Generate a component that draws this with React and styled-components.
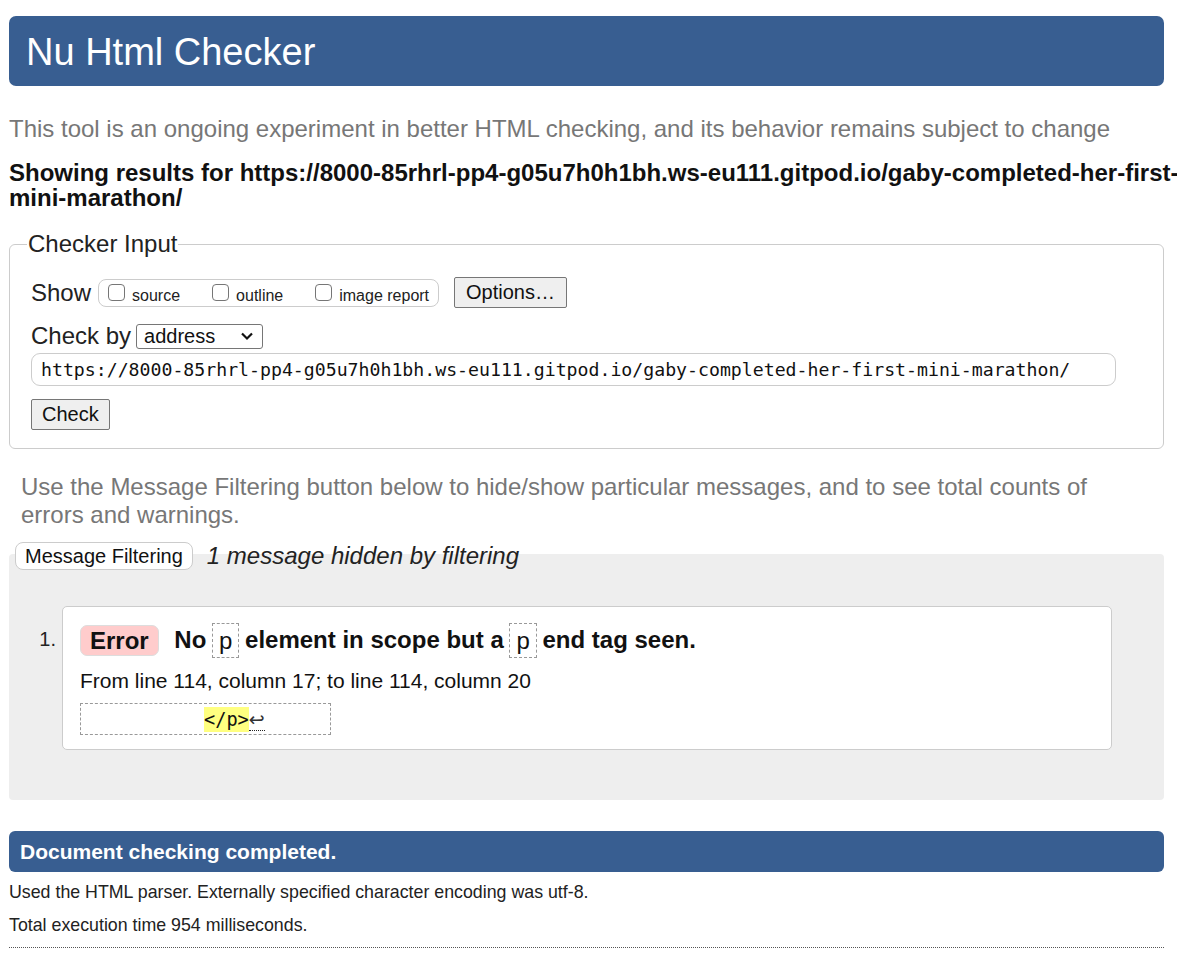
import React from "react";
import styled, { createGlobalStyle } from "styled-components";

const Global = createGlobalStyle`
  html, body { margin: 0; padding: 0; background: #fff; }
  body { font-family: "Liberation Sans", Arial, sans-serif; color: #000; }
`;

const Page = styled.div`
  width: 1155px;
  margin-left: 9px;
  padding-top: 16px;
  display: flex;
  flex-direction: column;
`;

const Header = styled.header`
  background: #385e91;
  border-radius: 7px;
  height: 70px;
  box-sizing: border-box;
  padding: 3px 0 0 17px;
  display: flex;
  align-items: center;
`;

const Title = styled.h1`
  margin: 0;
  font-size: 38px;
  font-weight: normal;
  color: #fff;
`;

const Intro = styled.p`
  margin: 29px 0 0;
  font-size: 24px;
  line-height: 28px;
  color: #777;
`;

const Results = styled.h2`
  margin: 17px 0 0;
  font-size: 24px;
  line-height: 25px;
  font-weight: bold;
  color: #111;
  white-space: nowrap;
`;

const Fieldset = styled.fieldset`
  margin: 20px 0 0;
  border: 1px solid #ccc;
  border-radius: 6px;
  padding: 19px 20px 18px 21px;
  display: flex;
  flex-direction: column;
  align-items: flex-start;
  min-width: 0;
`;

const Legend = styled.legend`
  font-size: 24px;
  line-height: 28px;
  padding: 0 1px;
  margin-left: -4px;
  color: #222;
`;

const Row = styled.div`
  display: flex;
  align-items: center;
  margin-top: ${(p) => p.$mt || 0}px;
`;

const Label = styled.span`
  font-size: 24px;
  line-height: 28px;
  color: #222;
`;

const CheckGroup = styled.div`
  display: flex;
  align-items: center;
  box-sizing: border-box;
  height: 28px;
  border: 1px solid #ccc;
  border-radius: 8px;
  padding: 0 9px 0 9px;
  margin-left: 7px;
  gap: 32px;
`;

const CheckItem = styled.label`
  display: flex;
  align-items: flex-end;
  gap: 7px;
  font-size: 16px;
  line-height: 20px;
  color: #222;
  padding-top: 4px;
`;

const Box = styled.span`
  display: inline-block;
  box-sizing: border-box;
  width: 17px;
  height: 17px;
  border: 1px solid #767676;
  border-radius: 4px;
  margin-bottom: 5px;
  background: #fff;
`;

const Button = styled.button`
  font-family: "Liberation Sans", Arial, sans-serif;
  font-size: 20px;
  color: #111;
  background: #efefef;
  border: 1px solid #767676;
  border-radius: 2px;
  height: 31px;
  padding: 0 ${(p) => p.$px || 11}px;
  margin: ${(p) => p.$m || "0"};
`;

const Select = styled.div`
  display: flex;
  align-items: center;
  justify-content: space-between;
  box-sizing: border-box;
  width: 127px;
  height: 25px;
  border: 1px solid #767676;
  border-radius: 3px;
  padding: 0 8px 0 7px;
  font-size: 20px;
  color: #111;
  margin-left: 5px;
`;

const UrlInput = styled.div`
  box-sizing: border-box;
  width: 1085px;
  height: 33px;
  border: 1px solid #ccc;
  border-radius: 9px;
  margin-top: 3px;
  padding-left: 9px;
  display: flex;
  align-items: center;
  font-family: "DejaVu Sans Mono", monospace;
  font-size: 18.2px;
  color: #111;
`;

const Hint = styled.p`
  margin: 24px 12px 0;
  font-size: 24px;
  line-height: 28px;
  color: #777;
  padding-right: 40px;
`;

const Filtered = styled.section`
  margin-top: 25px;
  background: #eee;
  border-radius: 4px;
  padding: 0 52px 50px 6px;
  display: flex;
  flex-direction: column;
`;

const FilterRow = styled.div`
  display: flex;
  align-items: center;
  gap: 14px;
  margin-top: -12px;
`;

const FilterButton = styled.button`
  font-family: "Liberation Sans", Arial, sans-serif;
  font-size: 20px;
  color: #111;
  background: #fff;
  border: 1px solid #ccc;
  border-radius: 8px;
  height: 28px;
  padding: 0 9px;
`;

const HiddenNote = styled.span`
  font-size: 24px;
  line-height: 28px;
  font-style: italic;
  color: #222;
`;

const MsgList = styled.ol`
  margin: 36px 0 0;
  padding: 0;
  list-style: none;
`;

const MsgItem = styled.li`
  display: grid;
  grid-template-columns: 47px 1fr;
`;

const Num = styled.span`
  font-size: 20px;
  line-height: 23px;
  color: #222;
  text-align: right;
  padding-right: 6px;
  padding-top: 22px;
`;

const Card = styled.div`
  background: #fff;
  border: 1px solid #ccc;
  border-radius: 5px;
  padding: 15px 17px 14px;
`;

const MsgLine = styled.p`
  margin: 0;
  font-size: 24px;
  line-height: 36px;
  font-weight: bold;
  color: #111;
`;

const Badge = styled.span`
  display: inline-block;
  vertical-align: middle;
  box-sizing: border-box;
  background: #fcc;
  border: 1px solid #ddd;
  border-radius: 7px;
  height: 31px;
  line-height: 29px;
  padding: 0 9px;
  margin: -2px 9px 0 0;
`;

const Code = styled.code`
  display: inline-block;
  vertical-align: middle;
  margin: -2px -1px 0;
  font-family: "Liberation Sans", Arial, sans-serif;
  font-weight: normal;
  border: 1px dashed #999;
  padding: 3px 6px;
  font-size: 24px;
  line-height: 27px;
`;

const Location = styled.p`
  margin: 11px 0 0;
  font-size: 21px;
  line-height: 24px;
  color: #111;
`;

const Extract = styled.pre`
  margin: 10px 0 0;
  box-sizing: border-box;
  width: 251px;
  height: 32px;
  border: 1px dashed #999;
  font-family: "DejaVu Sans Mono", monospace;
  font-size: 18.6px;
  line-height: 30px;
  padding-left: 123px;
  color: #111;
`;

const Mark = styled.mark`
  background: #ffff80;
  color: #111;
  padding: 2px 0;
`;

const Lf = styled.span`
  font-family: "DejaVu Sans", sans-serif;
  font-size: 19px;
  border-bottom: 1px dotted #222;
  color: #333;
`;

const Done = styled.div`
  margin-top: 31px;
  background: #385e91;
  border-radius: 6px;
  height: 41px;
  display: flex;
  align-items: center;
  padding-left: 11px;
  color: #fff;
  font-size: 21px;
  font-weight: bold;
`;

const Stat = styled.p`
  margin: ${(p) => p.$mt}px 0 0;
  font-size: 17.8px;
  line-height: 21px;
  color: #222;
`;

const Rule = styled.hr`
  margin: 11px 0 0;
  border: 0;
  border-top: 1px dotted #555;
`;

const Chevron = () => (
  <svg width="14" height="10" viewBox="0 0 14 10">
    <path d="M2 2.5 L7 7.5 L12 2.5" fill="none" stroke="#111" strokeWidth="2.2" />
  </svg>
);

export default function App() {
  const url =
    "https://8000-85rhrl-pp4-g05u7h0h1bh.ws-eu111.gitpod.io/gaby-completed-her-first-mini-marathon/";
  return (
    <>
      <Global />
      <Page>
        <Header>
          <Title>Nu Html Checker</Title>
        </Header>
        <Intro>
          This tool is an ongoing experiment in better HTML checking, and its behavior remains subject to change
        </Intro>
        <Results>
          Showing results for https://8000-85rhrl-pp4-g05u7h0h1bh.ws-eu111.gitpod.io/gaby-completed-her-first-
          <br />
          mini-marathon/
        </Results>
        <Fieldset>
          <Legend>Checker Input</Legend>
          <Row>
            <Label>Show</Label>
            <CheckGroup>
              <CheckItem>
                <Box />
                source
              </CheckItem>
              <CheckItem>
                <Box />
                outline
              </CheckItem>
              <CheckItem>
                <Box />
                image report
              </CheckItem>
            </CheckGroup>
            <Button $m="0 0 0 15px" $px={11}>Options…</Button>
          </Row>
          <Row $mt={14}>
            <Label>Check by</Label>
            <Select>
              <span>address</span>
              <Chevron />
            </Select>
          </Row>
          <UrlInput>{url}</UrlInput>
          <Button $m="13px 0 0" $px={10}>Check</Button>
        </Fieldset>
        <Hint>
          Use the Message Filtering button below to hide/show particular messages, and to see total counts of errors and warnings.
        </Hint>
        <Filtered>
          <FilterRow>
            <FilterButton>Message Filtering</FilterButton>
            <HiddenNote>1 message hidden by filtering</HiddenNote>
          </FilterRow>
          <MsgList>
            <MsgItem>
              <Num>1.</Num>
              <Card>
                <MsgLine>
                  <Badge>Error</Badge> No <Code>p</Code> element in scope but a <Code>p</Code> end tag seen.
                </MsgLine>
                <Location>From line 114, column 17; to line 114, column 20</Location>
                <Extract>
                  <Mark>&lt;/p&gt;</Mark>
                  <Lf>↩</Lf>
                </Extract>
              </Card>
            </MsgItem>
          </MsgList>
        </Filtered>
        <Done>Document checking completed.</Done>
        <Stat $mt={10}>Used the HTML parser. Externally specified character encoding was utf-8.</Stat>
        <Stat $mt={12}>Total execution time 954 milliseconds.</Stat>
        <Rule />
      </Page>
    </>
  );
}
